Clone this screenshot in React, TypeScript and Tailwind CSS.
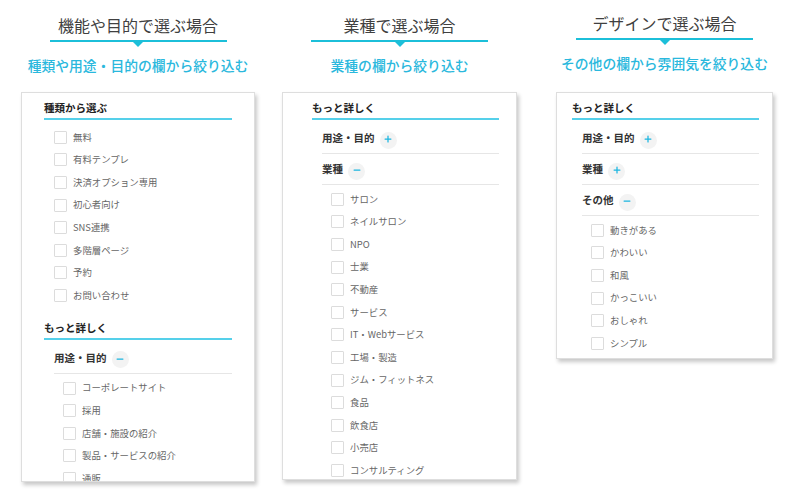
import { Plus, Minus } from 'lucide-react'

type Group = { label: string; open: boolean; items?: string[] }

type Section = {
  title: string
  items?: string[]
  groups?: Group[]
  mt?: string
}

type ColumnData = {
  heading: string
  sub: string
  width: string
  gap: string
  panel: string
  lift?: boolean
  sections: Section[]
}

const columns: ColumnData[] = [
  {
    heading: '機能や目的で選ぶ場合',
    sub: '種類や用途・目的の欄から絞り込む',
    width: 'w-[234px]',
    gap: 'ml-[21px]',
    panel: 'h-[390px] pl-[22px] pr-[22px]',
    sections: [
      {
        title: '種類から選ぶ',
        items: ['無料', '有料テンプレ', '決済オプション専用', '初心者向け', 'SNS連携', '多階層ページ', '予約', 'お問い合わせ'],
      },
      {
        title: 'もっと詳しく',
        mt: 'mt-[14px]',
        groups: [
          {
            label: '用途・目的',
            open: true,
            items: ['コーポレートサイト', '採用', '店舗・施設の紹介', '製品・サービスの紹介', '通販'],
          },
        ],
      },
    ],
  },
  {
    heading: '業種で選ぶ場合',
    sub: '業種の欄から絞り込む',
    width: 'w-[235px]',
    gap: 'ml-[27px]',
    panel: 'h-[388px] pl-[29px] pr-[17px]',
    sections: [
      {
        title: 'もっと詳しく',
        groups: [
          { label: '用途・目的', open: false },
          {
            label: '業種',
            open: true,
            items: [
              'サロン', 'ネイルサロン', 'NPO', '士業', '不動産', 'サービス', 'IT・Webサービス',
              '工場・製造', 'ジム・フィットネス', '食品', '飲食店', '小売店', 'コンサルティング',
            ],
          },
        ],
      },
    ],
  },
  {
    heading: 'デザインで選ぶ場合',
    sub: 'その他の欄から雰囲気を絞り込む',
    width: 'w-[217px]',
    gap: 'ml-[39px]',
    panel: 'h-[267px] pl-[15px] pr-[13px]',
    lift: true,
    sections: [
      {
        title: 'もっと詳しく',
        groups: [
          { label: '用途・目的', open: false },
          { label: '業種', open: false },
          { label: 'その他', open: true, items: ['動きがある', 'かわいい', '和風', 'かっこいい', 'おしゃれ', 'シンプル'] },
        ],
      },
    ],
  },
]

const CheckRow = ({ label }: { label: string }) => (
  <li className="flex h-[22.6px] items-center">
    <span className="h-[13px] w-[13px] shrink-0 rounded-[1px] border border-[#dcdcdc] bg-white" />
    <span className="ml-[6px] text-[9.4px] leading-none text-[#666]">{label}</span>
  </li>
)

// round grey button with a cyan plus / minus
const Toggle = ({ open }: { open: boolean }) => (
  <span className="ml-[5px] flex h-[17px] w-[17px] translate-y-[2px] items-center justify-center rounded-full bg-[#f3f3f3] text-[#1bb5e0]">
    <span className="-translate-y-[1px]">
      {open ? <Minus size={10} strokeWidth={3} /> : <Plus size={10} strokeWidth={3} />}
    </span>
  </span>
)

const Panel = ({ col }: { col: ColumnData }) => (
  <div
    className={`${col.panel} w-full overflow-hidden border border-[#dedede] bg-white pt-[8px] shadow-[2px_3px_4px_rgba(0,0,0,0.22)]`}
  >
    {col.sections.map((s) => (
      <div key={s.title} className={s.mt}>
        <h3 className="border-b-2 border-[#55d0ea] pb-[3px] text-[10.5px] leading-[14px] font-bold text-[#222]">
          {s.title}
        </h3>
        {s.items && (
          <ul className="pt-[6px] pl-[10px]">
            {s.items.map((it) => (
              <CheckRow key={it} label={it} />
            ))}
          </ul>
        )}
        {s.groups && (
          <div className="mt-[3px] pl-[10px]">
            {s.groups.map((g) => (
              <div key={g.label}>
                <div className="flex h-[31px] items-center border-b border-[#e6e6e6]">
                  <span className="text-[10.5px] font-bold text-[#333]">{g.label}</span>
                  <Toggle open={g.open} />
                </div>
                {g.open && g.items && (
                  <ul className="pt-[3px] pl-[9px]">
                    {g.items.map((it) => (
                      <CheckRow key={it} label={it} />
                    ))}
                  </ul>
                )}
              </div>
            ))}
          </div>
        )}
      </div>
    ))}
  </div>
)

const Column = ({ col }: { col: ColumnData }) => (
  <div className={`${col.width} ${col.gap} flex shrink-0 flex-col items-center`}>
    <div className={`flex flex-col items-center ${col.lift ? 'pt-[12px]' : 'pt-[14px]'}`}>
      <h2 className="text-[16px] leading-[22px] text-[#404040]">{col.heading}</h2>
      <div className="mt-[4px] h-[2px] w-[177px] bg-[#1cbfd9]" />
      <div className="h-0 w-0 border-x-[5px] border-t-[5px] border-x-transparent border-t-[#1cbfd9]" />
    </div>
    <p className="mt-[9px] text-[13.8px] leading-[18px] font-medium whitespace-nowrap text-[#2ab8dd]">
      {col.sub}
    </p>
    <div className={`${col.lift ? 'mt-[20px]' : 'mt-[18px]'} w-full`}>
      <Panel col={col} />
    </div>
  </div>
)

export default function App() {
  return (
    <div className="flex h-[499px] w-[800px] items-start overflow-hidden bg-white font-['Noto_Sans_CJK_JP',sans-serif]">
      {columns.map((c) => (
        <Column key={c.heading} col={c} />
      ))}
    </div>
  )
}
